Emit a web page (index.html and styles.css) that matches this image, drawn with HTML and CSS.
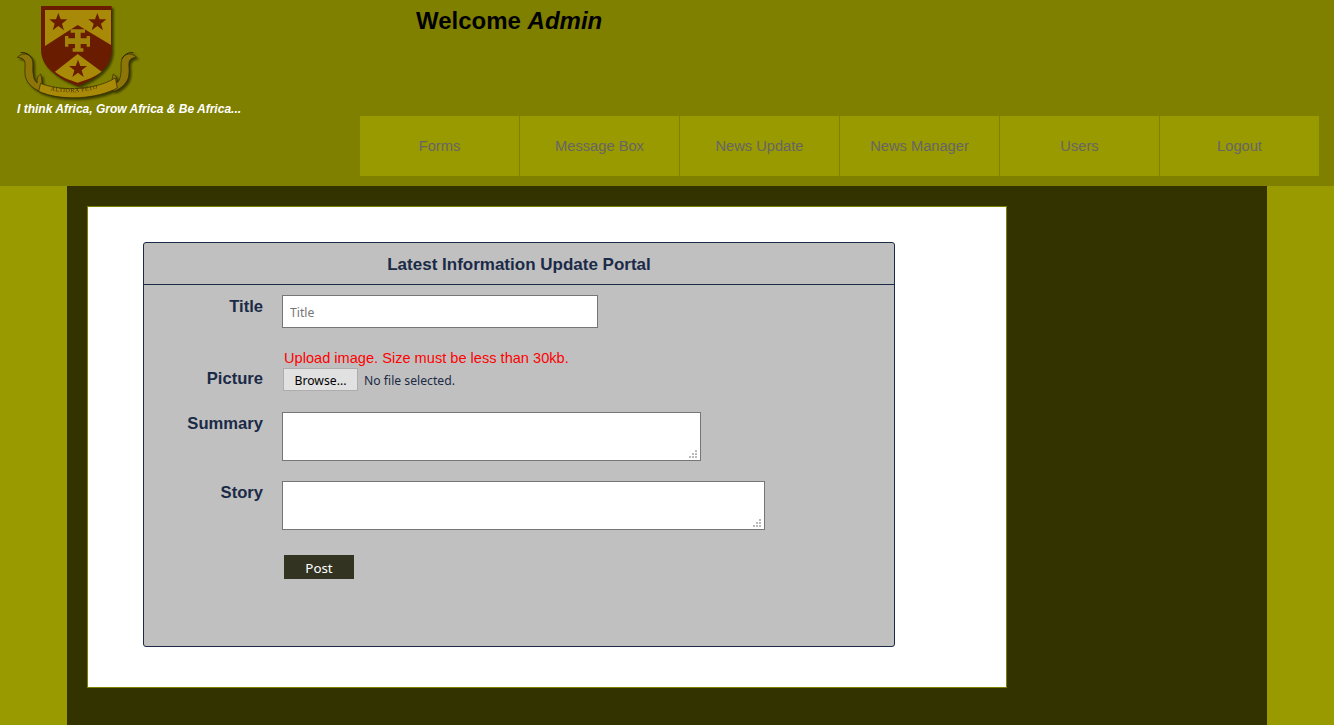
FILE: index.html
```html
<!DOCTYPE html>
<html lang="en">
<head>
<meta charset="utf-8">
<title>Latest Information Update Portal</title>
<link rel="stylesheet" href="styles.css">
</head>
<body>
<header class="site-header">
  <div class="brand">
    <svg class="crest" viewBox="0 0 390 300" aria-label="Crest">
      <defs>
        <path id="mottoCurve" d="M118 270 Q205 290 304 252"/>
        <g id="scrollTail">
          <path d="M22 172C36 158 56 158 66 176C72 192 66 208 70 224C72 238 76 246 82 248C80 238 82 228 92 222C98 240 96 258 92 274C76 270 56 256 48 236C40 212 50 192 42 180C36 174 30 172 22 172Z" fill="#8d7508" stroke="#2e2600" stroke-width="2"/>
          <path d="M32 158C46 156 60 164 66 176" fill="none" stroke="#2e2600" stroke-width="3"/>
        </g>
      </defs>
      <use href="#scrollTail"/>
      <use href="#scrollTail" transform="matrix(-1 0 0 1 402 0)"/>
      <path d="M92 250C140 270 240 278 316 234L322 264C260 298 150 304 86 274Z" fill="#a88a08" stroke="#2e2600" stroke-width="2"/>
      <text class="crest-motto"><textPath href="#mottoCurve" startOffset="2%">ALTIORA PETO</textPath></text>
      <path d="M93 18H305V150C305 205 252 238 204 258C150 238 93 205 93 150Z" fill="#6a1c00"/>
      <path d="M105 30H303V135L203 75L105 138Z" fill="#a88a08"/>
      <path d="M203 162L275 215C255 230 230 240 203 248C178 240 152 230 135 215Z" fill="#a88a08"/>
      <path class="crest-star" d="M145 39L152 58H172L156 71L162 91L145 78L128 91L134 71L118 58H138Z"/>
      <path class="crest-star" d="M262 39L269 58H289L273 71L279 91L262 78L245 91L251 71L235 58H255Z"/>
      <path class="crest-star" d="M204 179L211 198H231L215 211L221 231L204 218L187 231L193 211L177 198H197Z"/>
      <path d="M182 88H225V98H212V115H230V108H240V140H230V132H212V145H220V155H188V145H195V132H175V140H165V108H175V115H195V98H182Z" fill="#a2830a"/>
    </svg>
    <p class="tagline">I think Africa, Grow Africa &amp; Be Africa...</p>
  </div>
  <div class="header-right">
    <h1 class="welcome">Welcome <em>Admin</em></h1>
    <nav class="menu">
      <a class="menu-item" href="#">Forms</a>
      <a class="menu-item" href="#">Message Box</a>
      <a class="menu-item" href="#">News Update</a>
      <a class="menu-item" href="#">News Manager</a>
      <a class="menu-item" href="#">Users</a>
      <a class="menu-item" href="#">Logout</a>
    </nav>
  </div>
</header>
<main class="main">
  <section class="card">
    <form class="panel">
      <h2 class="panel-title">Latest Information Update Portal</h2>
      <div class="row row-title">
        <label class="field-label" for="title">Title</label>
        <input class="text-input" id="title" type="text" placeholder="Title">
      </div>
      <div class="row row-picture">
        <label class="field-label label-picture">Picture</label>
        <div class="picture-field">
          <p class="upload-note">Upload image. Size must be less than 30kb.</p>
          <div class="file-line">
            <button class="browse" type="button">Browse...</button>
            <span class="file-status">No file selected.</span>
          </div>
        </div>
      </div>
      <div class="row row-summary">
        <label class="field-label" for="summary">Summary</label>
        <div class="area-wrap">
          <textarea class="area area-summary" id="summary"></textarea>
          <svg class="grip" viewBox="0 0 8 8"><path d="M6 0h2v2H6zM3 3h2v2H3zM6 3h2v2H6zM0 6h2v2H0zM3 6h2v2H3zM6 6h2v2H6z"/></svg>
        </div>
      </div>
      <div class="row row-story">
        <label class="field-label" for="story">Story</label>
        <div class="area-wrap">
          <textarea class="area area-story" id="story"></textarea>
          <svg class="grip" viewBox="0 0 8 8"><path d="M6 0h2v2H6zM3 3h2v2H3zM6 3h2v2H6zM0 6h2v2H0zM3 6h2v2H3zM6 6h2v2H6z"/></svg>
        </div>
      </div>
      <div class="row row-post">
        <button class="post" type="button">Post</button>
      </div>
    </form>
  </section>
</main>
</body>
</html>
```
FILE: styles.css
```css
* { box-sizing: border-box; }
html, body { margin: 0; padding: 0; }
body {
  background: #999900;
  font-family: "Liberation Sans", Arial, sans-serif;
  color: #1b2a47;
}
.site-header {
  display: flex;
  height: 186px;
  background: #808000;
}
.brand {
  width: 360px;
  flex: none;
  padding-left: 10px;
}
.crest {
  display: block;
  width: 130px;
  height: 100px;
  filter: drop-shadow(2px 2px 1px #3a3a00);
}
.crest-star { fill: #6a1c00; }
.crest-motto {
  font-family: "Liberation Serif", serif;
  font-size: 18px;
  letter-spacing: 1.5px;
  fill: #3d2f00;
}
.tagline {
  margin: 2px 0 0 7px;
  color: #fff;
  font-size: 12px;
  line-height: 14px;
  font-weight: bold;
  font-style: italic;
}
.header-right { flex: 1; }
.welcome {
  height: 116px;
  margin: 0;
  padding: 7px 0 0 56px;
  color: #000;
  font-size: 24px;
  line-height: 28px;
  font-weight: bold;
}
.menu {
  display: flex;
  height: 60px;
  width: 959px;
  background: #999900;
}
.menu-item {
  flex: none;
  width: 160px;
  line-height: 60px;
  text-align: center;
  color: #666;
  font-size: 14.67px;
  text-decoration: none;
  border-right: 1px solid #808000;
}
.menu-item:last-child {
  width: 159px;
  border-right: 0;
}
.main {
  width: 1200px;
  height: 539px;
  margin: 0 auto;
  padding: 20px;
  background: #333300;
}
.card {
  width: 920px;
  height: 482px;
  padding: 35px 0 0 55px;
  background: #fff;
  border: 1px solid #808000;
}
.panel {
  width: 752px;
  height: 405px;
  background: #c0c0c0;
  border: 1px solid #1b2a47;
  border-radius: 3px;
}
.panel-title {
  height: 42px;
  margin: 0;
  padding-top: 1px;
  border-bottom: 1px solid #1b2a47;
  text-align: center;
  font-size: 17px;
  line-height: 41px;
  font-weight: bold;
}
.row {
  display: flex;
  align-items: flex-start;
  padding-left: 138px;
}
.field-label {
  flex: none;
  width: 119px;
  margin-left: -138px;
  margin-right: 19px;
  text-align: right;
  font-size: 16.6px;
  line-height: 20px;
  font-weight: bold;
}
.row-title { margin-top: 10px; }
.row-title .field-label { margin-top: 2px; }
.text-input {
  width: 316px;
  height: 33px;
  padding: 1px 7px 0;
  background: #fff;
  border: 1px solid #767676;
  border-radius: 0;
  outline: 0;
  font-family: "Noto Sans", sans-serif;
  font-size: 12.2px;
}
.text-input::placeholder { color: #757575; opacity: 1; }
.row-picture { margin-top: 20px; }
.label-picture { margin-top: 21px; }
.picture-field { padding-left: 2px; }
.upload-note {
  margin: 0;
  color: #f00;
  font-size: 14.6px;
  line-height: 20px;
}
.file-line {
  display: flex;
  align-items: center;
  gap: 6px;
  margin-left: -1px;
}
.browse {
  width: 75px;
  height: 23px;
  padding: 2px 0 0;
  background: #e1e1e1;
  border: 1px solid #adadad;
  border-radius: 0;
  color: #000;
  font-family: "Noto Sans", sans-serif;
  font-size: 12.2px;
}
.file-status {
  padding-top: 2px;
  font-family: "Noto Sans", sans-serif;
  font-size: 12.2px;
}
.row-summary { margin-top: 21px; }
.row-story { margin-top: 20px; }
.row-summary .field-label,
.row-story .field-label { margin-top: 2px; }
.area-wrap { position: relative; height: 49px; }
.area {
  display: block;
  height: 49px;
  padding: 2px;
  background: #fff;
  border: 1px solid #767676;
  border-radius: 0;
  outline: 0;
  resize: none;
}
.area-summary { width: 419px; }
.area-story { width: 483px; }
.grip {
  position: absolute;
  right: 4px;
  bottom: 3px;
  width: 8px;
  height: 8px;
  fill: #bbb;
}
.row-post { margin-top: 25px; padding-left: 140px; }
.post {
  width: 70px;
  height: 24px;
  padding: 2px 0 0;
  background: #333322;
  border: 0;
  color: #fff;
  font-family: "Noto Sans", sans-serif;
  font-size: 13.33px;
}
```
